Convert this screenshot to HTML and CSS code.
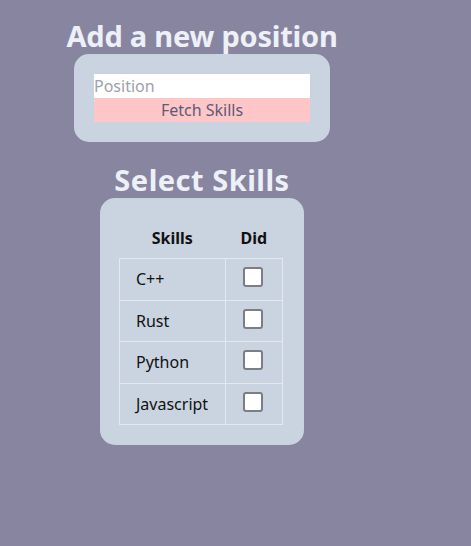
FILE: index.html
```html
<!DOCTYPE html>
<html>
<head>
<meta charset="utf-8">
<link rel="stylesheet" href="styles.css">
</head>
<body>
<div class="page">
  <h1 class="title title-1">Add a new position</h1>
  <div class="card card-form">
    <input class="pos-input" type="text" placeholder="Position">
    <button class="fetch-btn">Fetch Skills</button>
  </div>
  <h2 class="title title-2">Select Skills</h2>
  <div class="card card-table">
    <table class="skills">
      <thead>
        <tr><th class="col-skill">Skills</th><th class="col-did">Did</th></tr>
      </thead>
      <tbody>
        <tr><td>C++</td><td class="cb-cell"><input class="cb" type="checkbox"></td></tr>
        <tr><td>Rust</td><td class="cb-cell"><input class="cb" type="checkbox"></td></tr>
        <tr><td>Python</td><td class="cb-cell"><input class="cb" type="checkbox"></td></tr>
        <tr><td>Javascript</td><td class="cb-cell"><input class="cb" type="checkbox"></td></tr>
      </tbody>
    </table>
  </div>
</div>
</body>
</html>
```
FILE: styles.css
```css
html, body {
  margin: 0;
  padding: 0;
}
body {
  background: #8885a1;
  font-family: "Noto Sans", "Open Sans", sans-serif;
  height: 546px;
}
.page {
  width: 404px;
  display: flex;
  flex-direction: column;
  align-items: center;
}
.title {
  margin: 18px 0 0;
  font-size: 29px;
  line-height: 36px;
  font-weight: 700;
  color: #eef0f8;
}
.title-1 {
  letter-spacing: -0.22px;
}
.title-2 {
  margin-top: 20px;
  letter-spacing: 0.5px;
}
.card {
  background: #cad4e0;
  border-radius: 15px;
  padding: 20px;
}
.card-form {
  width: 216px;
  display: flex;
  flex-direction: column;
}
.pos-input {
  display: block;
  box-sizing: border-box;
  width: 216px;
  height: 24px;
  border: none;
  outline: none;
  padding: 0;
  margin: 0;
  background: #ffffff;
  font-family: inherit;
  font-size: 16px;
  color: #333;
}
.pos-input::placeholder {
  color: #a0a0ad;
}
.fetch-btn {
  display: block;
  width: 216px;
  height: 24px;
  border: none;
  padding: 0;
  margin: 0;
  background: #fec6c7;
  color: #5d5a78;
  font-family: inherit;
  font-size: 16px;
  text-align: center;
}
.card-table {
  padding: 20px 21px 20px 19px;
}
.skills {
  border-collapse: collapse;
  width: 164px;
  font-size: 16px;
  color: #111;
}
.skills th {
  height: 40px;
  padding: 0;
  font-weight: 700;
  text-align: center;
}
.col-skill {
  width: 106px;
}
.col-did {
  width: 58px;
}
.skills td {
  height: 40.5px;
  padding: 0 0 0 16px;
  border: 1px solid #e4e9f0;
  text-align: left;
}
.skills td.cb-cell {
  padding: 0;
  text-align: center;
}
.cb {
  appearance: none;
  -webkit-appearance: none;
  display: block;
  box-sizing: border-box;
  width: 20px;
  height: 20px;
  margin: 0 auto;
  background: #ffffff;
  border: 2px solid #7d7d84;
  border-radius: 3px;
  position: relative;
  top: -2px;
  left: -1px;
}
```
